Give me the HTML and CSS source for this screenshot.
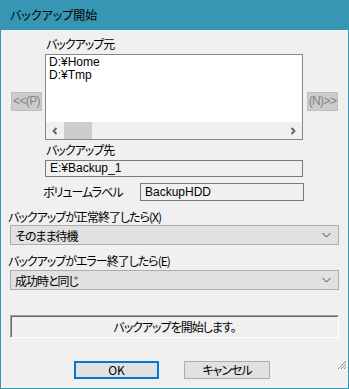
FILE: index.html
```html
<!DOCTYPE html>
<html lang="ja">

<head>
    <meta charset="UTF-8">
    <link rel="stylesheet" href="styles.css">
    <title>バックアップ開始</title>
</head>

<body>
    <div class="window">
        <div class="titlebar">バックアップ開始</div>

        <div class="srcrow">
            <button class="navbtn">&lt;&lt;(P)</button>
            <div class="srccol">
                <div class="label">バックアップ元</div>
                <div class="listbox">
                    <div class="items">
                        <div>D:¥Home</div>
                        <div>D:¥Tmp</div>
                    </div>
                    <div class="hscroll">
                        <svg class="arrow" width="8" height="8" viewBox="0 0 8 8"><path d="M5.5 1 L2.5 4 L5.5 7" stroke="#606060" stroke-width="1.8" fill="none"/></svg>
                        <div class="thumb"></div>
                        <svg class="arrow right" width="8" height="8" viewBox="0 0 8 8"><path d="M2.5 1 L5.5 4 L2.5 7" stroke="#606060" stroke-width="1.8" fill="none"/></svg>
                    </div>
                </div>
            </div>
            <button class="navbtn next">(N)&gt;&gt;</button>
        </div>

        <div class="dest">
            <div class="label">バックアップ先</div>
            <div class="textbox">E:¥Backup_1</div>
        </div>

        <div class="volrow">
            <div class="label">ボリュームラベル</div>
            <div class="textbox vol">BackupHDD</div>
        </div>

        <div class="label optlabel">バックアップが正常終了したら(X)</div>
        <div class="combo">
            <span>そのまま待機</span>
            <svg width="9" height="6" viewBox="0 0 9 6"><path d="M0.5 1 L4.5 5 L8.5 1" stroke="#444" stroke-width="1" fill="none"/></svg>
        </div>

        <div class="label optlabel">バックアップがエラー終了したら(E)</div>
        <div class="combo second">
            <span>成功時と同じ</span>
            <svg width="9" height="6" viewBox="0 0 9 6"><path d="M0.5 1 L4.5 5 L8.5 1" stroke="#444" stroke-width="1" fill="none"/></svg>
        </div>

        <div class="status">バックアップを開始します。</div>

        <div class="buttons">
            <button class="btn default">OK</button>
            <button class="btn">キャンセル</button>
        </div>

        <svg class="grip" width="10" height="10" viewBox="0 0 10 10">
            <path d="M9 1 L1 9 M9 4 L4 9 M9 7 L7 9" stroke="#8a8a8a" stroke-width="1" fill="none"/>
        </svg>
    </div>
</body>

</html>
```

FILE: styles.css
```css
* {
    padding: 0;
    margin: 0;
    box-sizing: border-box;
}

body {
    font-family: "Noto Sans CJK JP", "Liberation Sans", sans-serif;
    font-size: 12px;
    font-feature-settings: "palt";
    letter-spacing: -1px;
    color: #000;
    background: #f0f0f0;
}

.window {
    position: relative;
    width: 349px;
    height: 389px;
    border: 1px solid #3796b4;
    border-top: 0;
    background: #f0f0f0;
    display: flex;
    flex-direction: column;
}

.titlebar {
    height: 30px;
    background: #3796b4;
    padding-left: 9px;
    line-height: 30px;
    letter-spacing: 0;
}

.label {
    line-height: 14px;
    height: 14px;
    white-space: nowrap;
}

.srcrow {
    display: flex;
    align-items: flex-start;
    margin-top: 7px;
}

.navbtn {
    width: 31px;
    height: 19px;
    margin-top: 55px;
    margin-left: 10px;
    background: #cccccc;
    border: 1px solid #bfbfbf;
    color: #838383;
    font-family: "Liberation Sans", sans-serif;
    font-size: 12px;
    letter-spacing: -0.6px;
    line-height: 17px;
    text-align: center;
}

.navbtn.next {
    margin-left: 4px;
}

.srccol {
    width: 258px;
    margin-left: 3px;
}

.srccol .label {
    padding-left: 1px;
}

.listbox {
    margin-top: 3px;
    height: 86px;
    border: 1px solid #828790;
    background: #fff;
    display: flex;
    flex-direction: column;
}

.items {
    flex: 1;
    padding: 1px 3px;
    line-height: 13px;
    letter-spacing: 0;
    font-family: "Liberation Sans", "Noto Sans CJK JP", sans-serif;
}

.hscroll {
    height: 17px;
    background: #f0f0f0;
    display: flex;
    align-items: center;
}

.hscroll .arrow {
    margin-left: 5px;
}

.hscroll .arrow.right {
    margin-left: auto;
    margin-right: 5px;
}

.thumb {
    width: 28px;
    height: 17px;
    margin-left: 5px;
    background: #cdcdcd;
}

.dest {
    margin-left: 44px;
    width: 258px;
    margin-top: 3px;
}

.dest .label {
    padding-left: 1px;
}

.textbox {
    margin-top: 3px;
    height: 17px;
    border: 1px solid #7a7a7a;
    background: #f0f0f0;
    padding-left: 4px;
    line-height: 15px;
    letter-spacing: 0;
    font-family: "Liberation Sans", "Noto Sans CJK JP", sans-serif;
}

.volrow {
    display: flex;
    align-items: center;
    margin-top: 6px;
    margin-left: 42px;
    width: 261px;
}

.textbox.vol {
    margin-top: 0;
    margin-left: auto;
    width: 164px;
    height: 18px;
    line-height: 16px;
}

.optlabel {
    margin-top: 9px;
    margin-left: 7px;
}

.combo {
    margin-top: 1px;
    margin-left: 9px;
    width: 329px;
    height: 20px;
    background: #e1e1e1;
    border: 1px solid #adadad;
    display: flex;
    align-items: center;
    justify-content: space-between;
    padding: 0 7px 0 4px;
}

.combo.second {
    margin-top: 2px;
}

.status {
    margin-top: 25px;
    margin-left: 9px;
    width: 329px;
    height: 23px;
    border: 1px solid #fff;
    border-top-color: #a0a0a0;
    border-left-color: #a0a0a0;
    box-shadow: inset 1px 1px 0 #696969;
    line-height: 21px;
    text-align: center;
}

.buttons {
    display: flex;
    gap: 25px;
    margin-top: 23px;
    padding-left: 73px;
}

.btn {
    width: 86px;
    height: 18px;
    background: #e1e1e1;
    border: 1px solid #adadad;
    font-family: "Noto Sans CJK JP", "Liberation Sans", sans-serif;
    font-size: 12px;
    font-feature-settings: "palt";
    letter-spacing: -1px;
    line-height: 16px;
}

.btn.default {
    width: 85px;
    border: 2px solid #0078d7;
    line-height: 14px;
    letter-spacing: 0;
}

.grip {
    position: absolute;
    right: 1px;
    bottom: 18px;
}
```
